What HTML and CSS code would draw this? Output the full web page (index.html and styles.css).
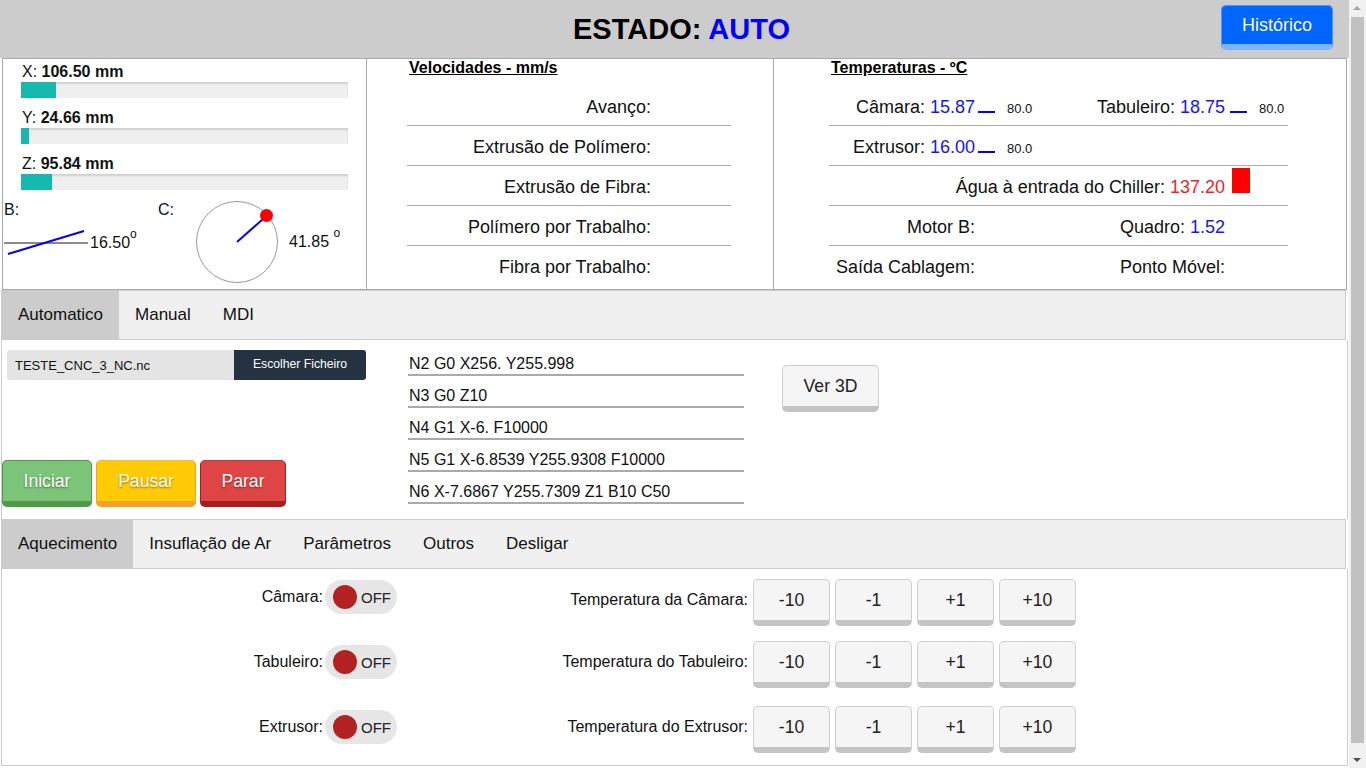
FILE: index.html
```html
<!DOCTYPE html>
<html lang="pt">
<head>
<meta charset="utf-8">
<title>Estado</title>
<link rel="stylesheet" href="styles.css">
</head>
<body>
<header class="topbar">
  <h1 class="state">ESTADO: <span class="state-value">AUTO</span></h1>
  <div class="top-actions"><button class="btn-history">Histórico</button></div>
</header>
<main class="page">
  <section class="status">
    <div class="axes">
      <div class="axis">
        <div class="axis-label">X: <b>106.50 mm</b></div>
        <div class="bar"><div class="fill" style="width:35px"></div></div>
      </div>
      <div class="axis">
        <div class="axis-label">Y: <b>24.66 mm</b></div>
        <div class="bar"><div class="fill" style="width:8px"></div></div>
      </div>
      <div class="axis">
        <div class="axis-label">Z: <b>95.84 mm</b></div>
        <div class="bar"><div class="fill" style="width:31px"></div></div>
      </div>
      <div class="gauges">
        <div class="gauge-b">
          <div class="gauge-label">B:</div>
          <div class="gauge-b-row">
            <svg class="b-svg" width="84" height="30" viewBox="0 0 84 30">
              <line x1="0" y1="15" x2="84" y2="15" stroke="#8a8a8a" stroke-width="2"/>
              <line x1="4" y1="26" x2="80" y2="3" stroke="#0000ff" stroke-width="2"/>
            </svg>
            <span class="deg-value">16.50<sup>o</sup></span>
          </div>
        </div>
        <div class="gauge-c">
          <div class="gauge-label">C:</div>
          <svg class="c-svg" width="84" height="84" viewBox="0 0 84 84">
            <circle cx="42" cy="42" r="40.5" fill="none" stroke="#999" stroke-width="1"/>
            <line x1="42" y1="42" x2="68" y2="19" stroke="#0000ff" stroke-width="2"/>
            <circle cx="71.5" cy="15.5" r="6.5" fill="#ff0000"/>
          </svg>
          <span class="deg-value c-value">41.85 <sup>o</sup></span>
        </div>
      </div>
    </div>

    <div class="speeds">
      <div class="col-title">Velocidades - mm/s</div>
      <div class="srow"><span class="lbl">Avanço:</span><span class="val"></span></div>
      <div class="srow"><span class="lbl">Extrusão de Polímero:</span><span class="val"></span></div>
      <div class="srow"><span class="lbl">Extrusão de Fibra:</span><span class="val"></span></div>
      <div class="srow"><span class="lbl">Polímero por Trabalho:</span><span class="val"></span></div>
      <div class="srow"><span class="lbl">Fibra por Trabalho:</span><span class="val"></span></div>
    </div>

    <div class="temps">
      <div class="col-title">Temperaturas - ºC</div>
      <div class="trow">
        <div class="tc c1">Câmara: <span class="num">15.87</span></div>
        <div class="tc c2"><span class="mini-bar"></span><span class="setp">80.0</span></div>
        <div class="tc c3">Tabuleiro: <span class="num">18.75</span></div>
        <div class="tc c4"><span class="mini-bar"></span><span class="setp">80.0</span></div>
      </div>
      <div class="trow">
        <div class="tc c1">Extrusor: <span class="num">16.00</span></div>
        <div class="tc c2"><span class="mini-bar"></span><span class="setp">80.0</span></div>
        <div class="tc c3"></div>
        <div class="tc c4"></div>
      </div>
      <div class="trow">
        <div class="tc span3">Água à entrada do Chiller: <span class="num hot">137.20</span></div>
        <div class="tc c4 alarm-cell"><span class="alarm"></span></div>
      </div>
      <div class="trow">
        <div class="tc c1">Motor B:</div>
        <div class="tc c2"></div>
        <div class="tc c3">Quadro: <span class="num">1.52</span></div>
        <div class="tc c4"></div>
      </div>
      <div class="trow">
        <div class="tc c1">Saída Cablagem:</div>
        <div class="tc c2"></div>
        <div class="tc c3">Ponto Móvel:</div>
        <div class="tc c4"></div>
      </div>
    </div>
  </section>

  <nav class="tabs">
    <span class="tab active">Automatico</span>
    <span class="tab">Manual</span>
    <span class="tab">MDI</span>
  </nav>
  <section class="auto-panel">
    <div class="auto-left">
      <div class="file-input"><span class="file-name">TESTE_CNC_3_NC.nc</span><span class="file-btn">Escolher Ficheiro</span></div>
      <div class="run-buttons">
        <button class="btn btn-start">Iniciar</button>
        <button class="btn btn-pause">Pausar</button>
        <button class="btn btn-stop">Parar</button>
      </div>
    </div>
    <ol class="gcode">
      <li>N2 G0 X256. Y255.998</li>
      <li>N3 G0 Z10</li>
      <li>N4 G1 X-6. F10000</li>
      <li>N5 G1 X-6.8539 Y255.9308 F10000</li>
      <li>N6 X-7.6867 Y255.7309 Z1 B10 C50</li>
    </ol>
    <button class="btn btn-light btn-3d">Ver 3D</button>
  </section>

  <nav class="tabs">
    <span class="tab active">Aquecimento</span>
    <span class="tab">Insuflação de Ar</span>
    <span class="tab">Parâmetros</span>
    <span class="tab">Outros</span>
    <span class="tab">Desligar</span>
  </nav>
  <section class="heat-panel">
    <div class="heat-switches">
      <span class="sw-label">Câmara:</span><span class="toggle"><span class="knob"></span>OFF</span>
      <span class="sw-label">Tabuleiro:</span><span class="toggle"><span class="knob"></span>OFF</span>
      <span class="sw-label">Extrusor:</span><span class="toggle"><span class="knob"></span>OFF</span>
    </div>
    <div class="heat-steps">
      <div class="step-row">
        <span class="step-label">Temperatura da Câmara:</span>
        <button class="btn btn-light step">-10</button>
        <button class="btn btn-light step">-1</button>
        <button class="btn btn-light step">+1</button>
        <button class="btn btn-light step">+10</button>
      </div>
      <div class="step-row">
        <span class="step-label">Temperatura do Tabuleiro:</span>
        <button class="btn btn-light step">-10</button>
        <button class="btn btn-light step">-1</button>
        <button class="btn btn-light step">+1</button>
        <button class="btn btn-light step">+10</button>
      </div>
      <div class="step-row">
        <span class="step-label">Temperatura do Extrusor:</span>
        <button class="btn btn-light step">-10</button>
        <button class="btn btn-light step">-1</button>
        <button class="btn btn-light step">+1</button>
        <button class="btn btn-light step">+10</button>
      </div>
    </div>
  </section>
</main>
<div class="scrollbar" aria-hidden="true">
  <span class="sb-arrow sb-up"></span>
  <span class="sb-track"><span class="sb-thumb"></span></span>
  <span class="sb-arrow sb-down"></span>
</div>
</body>
</html>
```

FILE: styles.css
```css
* { box-sizing: border-box; }
html, body { margin: 0; padding: 0; }
body {
  font-family: "Liberation Sans", Arial, Helvetica, sans-serif;
  font-size: 16px;
  color: #111;
  background: #fff;
  margin-right: 17px;
}
button { font-family: inherit; cursor: pointer; }

/* ---------- fake window scrollbar ---------- */
.scrollbar {
  position: fixed;
  top: 0;
  right: 0;
  bottom: 0;
  width: 17px;
  display: flex;
  flex-direction: column;
  background: #f1f1f1;
}
.sb-arrow {
  position: relative;
  height: 17px;
  flex: none;
}
.sb-up::after, .sb-down::after {
  content: "";
  position: absolute;
  left: 4px;
  border-left: 4px solid transparent;
  border-right: 4px solid transparent;
}
.sb-up::after { top: 6px; border-bottom: 4px solid #a3a3a3; }
.sb-down::after { top: 7px; border-top: 4px solid #505050; }
.sb-track { flex: 1; padding: 0 2px; }
.sb-thumb {
  display: block;
  height: 726px;
  margin-top: 0;
  background: #c1c1c1;
}

/* ---------- top bar ---------- */
.topbar {
  display: grid;
  grid-template-columns: 1fr auto 1fr;
  align-items: start;
  height: 58px;
  background: #cccccc;
}
.state {
  grid-column: 2;
  margin: 0 0 0 14px;
  padding-top: 1px;
  font-size: 29px;
  font-weight: bold;
  line-height: 57px;
  color: #000;
  white-space: nowrap;
}
.state-value { color: #0000ff; }
.top-actions {
  grid-column: 3;
  justify-self: end;
  padding: 5px 16px 0 0;
}
.btn-history {
  height: 45px;
  padding: 0 20px;
  font-size: 18px;
  line-height: 38px;
  color: #fff;
  background: #0066ff;
  border: 1px solid #4d94ff;
  border-bottom: 6px solid #80b3ff;
  border-radius: 5px;
  text-shadow: 0 0 1px rgba(0,0,0,.3);
}

/* ---------- status panel ---------- */
.page { padding-bottom: 11px; }
.status {
  display: grid;
  grid-template-columns: 364px 407px 1fr;
  height: 232px;
  margin: 0 2px;
  border: 1px solid #aaa;
}
.axes {
  border-right: 1px solid #aaa;
  padding: 3px 18px 0;
}
.axis { margin-bottom: 10px; }
.axis-label {
  line-height: 20px;
  padding-left: 1px;
  font-size: 16px;
}
.bar {
  height: 16px;
  background: #efefef;
  box-shadow: inset 0 2px 2px rgba(0,0,0,.13);
}
.fill { height: 16px; background: #17b8b0; }

.gauges {
  display: flex;
  margin: 0 -18px;
  padding-left: 1px;
}
.gauge-label { line-height: 20px; }
.gauge-b { width: 154px; }
.gauge-b-row {
  display: flex;
  align-items: center;
  height: 30px;
  margin-top: 8px;
}
.b-svg { display: block; }
.deg-value { margin-left: 2px; line-height: 20px; }
.deg-value sup { font-size: 12px; line-height: 0; vertical-align: 10px; }
.gauge-c { display: flex; align-items: flex-start; }
.c-svg { display: block; margin-left: 21px; }
.c-value { align-self: center; margin-left: 10px; }

.col-title {
  font-size: 16px;
  font-weight: bold;
  text-decoration: underline;
  line-height: 18px;
  margin: 0 0 9px 2px;
  color: #000;
}
.speeds {
  border-right: 1px solid #aaa;
  padding-left: 40px;
}
.srow {
  display: grid;
  grid-template-columns: 244px 80px;
  width: 324px;
  height: 40px;
  border-bottom: 1px solid #aaa;
  font-size: 18px;
}
.srow:last-child, .trow:last-child { border-bottom: 0; }
.srow .lbl {
  text-align: right;
  padding-top: 3px;
  line-height: 36px;
  white-space: nowrap;
}

.temps { padding-left: 55px; }
.trow {
  display: grid;
  grid-template-columns: 146px 84px 166px 63px;
  width: 459px;
  height: 40px;
  border-bottom: 1px solid #aaa;
  font-size: 18px;
}
.tc {
  padding-top: 3px;
  line-height: 36px;
  white-space: nowrap;
}
.c1, .c3, .span3 { text-align: right; }
.span3 { grid-column: 1 / span 3; }
.c2 { padding-left: 3px; }
.c4 { padding-left: 5px; }
.num { color: #1414ff; }
.num.hot { color: #ff1a1a; }
.mini-bar {
  display: inline-block;
  width: 17px;
  height: 2px;
  background: #0000ff;
}
.setp { font-size: 13px; margin-left: 12px; }
.alarm-cell { padding: 2px 0 0 7px; }
.alarm { display: block; width: 18px; height: 25px; background: #ff0000; }

/* ---------- tabs ---------- */
.tabs {
  display: flex;
  height: 50px;
  margin: 0 3px 0 1px;
  background: #f0f0f0;
  border: 1px solid #ccc;
}
.tab {
  padding: 0 16px;
  font-size: 17px;
  line-height: 48px;
  color: #111;
}
.tab.active { background: #cccccc; }

/* ---------- buttons ---------- */
.btn {
  height: 47px;
  padding: 0 20px;
  font-size: 17.6px;
  line-height: 40px;
  border: 1px solid;
  border-bottom-width: 6px;
  border-radius: 5px;
}
.btn-start, .btn-pause, .btn-stop {
  color: #fff;
  text-shadow: 0 1px 2px rgba(0,0,0,.45);
}
.btn-start { background: #7cc478; border-color: #4e9b48; }
.btn-pause { background: #ffcb05; border-color: #f6a02e; border-top-color: #ffbb22; }
.btn-stop { background: #df4545; border-color: #a51e1e; border-top-color: #c93434; }
.btn-light {
  background: #f5f5f5;
  color: #222;
  border-color: #cfcfcf;
  border-bottom-color: #c4c4c4;
}

/* ---------- automatic panel ---------- */
.auto-panel {
  display: flex;
  align-items: flex-start;
  height: 179px;
  margin: 0 1px;
  border-left: 1px solid #ccc;
  border-right: 1px solid #ccc;
}
.auto-left {
  display: flex;
  flex-direction: column;
  justify-content: space-between;
  width: 364px;
  height: 179px;
  padding: 10px 0 12px;
}
.file-input {
  display: flex;
  height: 30px;
  margin-left: 5px;
  width: 359px;
}
.file-name {
  width: 227px;
  padding-left: 8px;
  line-height: 31px;
  font-size: 13px;
  background: #e4e4e4;
  border-radius: 3px 0 0 3px;
}
.file-btn {
  flex: 1;
  text-align: center;
  line-height: 29px;
  font-size: 12.2px;
  color: #fff;
  background: #243242;
  border-radius: 0 3px 3px 0;
}
.run-buttons { display: flex; gap: 4px; }
.btn-start { width: 90px; }
.btn-pause { width: 100px; }
.btn-stop { width: 86px; }

.gcode {
  list-style: none;
  width: 336px;
  margin: 4px 0 0 42px;
  padding: 0;
}
.gcode li {
  height: 32px;
  padding: 10px 0 0 1px;
  line-height: 20px;
  border-bottom: 2px solid #aaa;
  white-space: nowrap;
}
.btn-3d {
  width: 97px;
  margin: 25px 0 0 38px;
  padding: 0;
}

/* ---------- heating panel ---------- */
.heat-panel {
  display: flex;
  align-items: flex-start;
  height: 197px;
  margin: 0 1px;
  padding-top: 10px;
  border: 1px solid #ccc;
  border-top: 0;
}
.heat-switches {
  display: grid;
  grid-template-columns: 1fr 72px;
  column-gap: 2px;
  row-gap: 31px;
  align-items: center;
  width: 395px;
  margin-top: 1px;
}
.sw-label { text-align: right; font-size: 16px; }
.toggle {
  display: flex;
  align-items: center;
  height: 34px;
  padding-left: 8px;
  background: #e6e6e6;
  border-radius: 17px;
  font-size: 15px;
  color: #222;
}
.knob {
  width: 24px;
  height: 24px;
  margin-right: 4px;
  border-radius: 50%;
  background: #b22222;
}
.step-row {
  display: grid;
  grid-template-columns: 351px repeat(4, 77px);
  column-gap: 5px;
}
.step-row + .step-row { margin-top: 15px; }
.step-row:last-child { margin-top: 18px; }
.step-label {
  text-align: right;
  line-height: 42px;
  font-size: 16px;
  white-space: nowrap;
}
.step { width: 77px; padding: 0; }
```
